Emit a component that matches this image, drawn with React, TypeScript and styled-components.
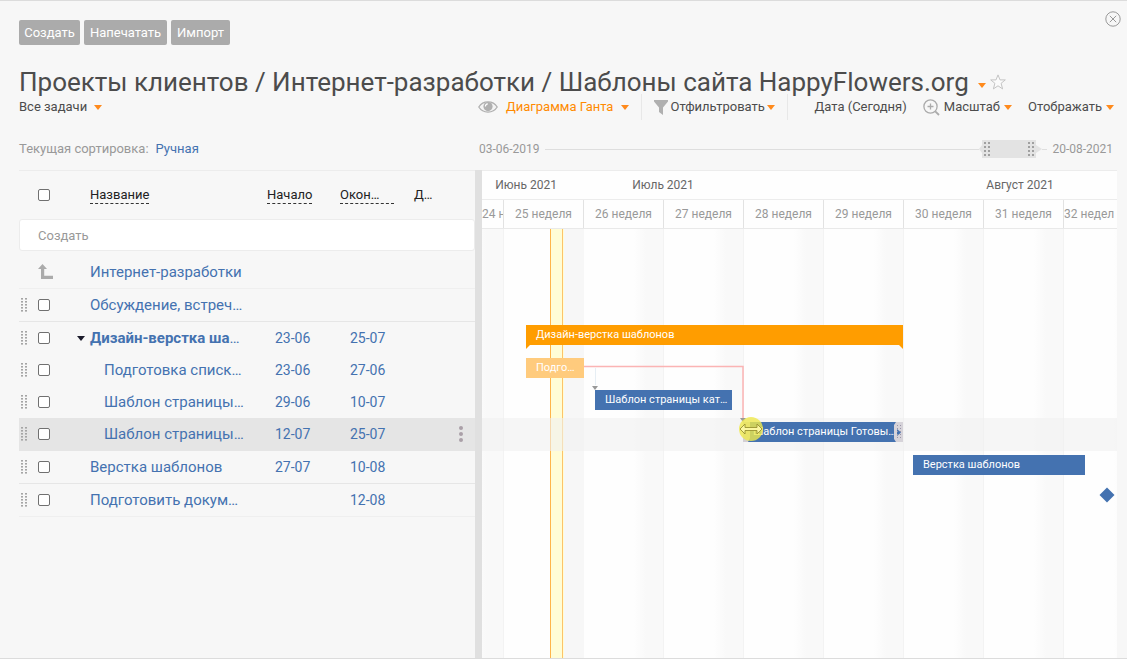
import React from "react";
import styled, { createGlobalStyle, css } from "styled-components";

const GlobalStyle = createGlobalStyle`
  *, *::before, *::after { box-sizing: border-box; }
  body {
    margin: 0;
    background: #f7f7f7;
    color: #4c4c4c;
    font-family: Roboto, "Open Sans", sans-serif;
    font-size: 13px;
    line-height: 20px;
  }
  button, input { font: inherit; color: inherit; }
  button { border: 0; padding: 0; background: none; cursor: pointer; }
  a { color: #4472b0; text-decoration: none; }
`;

const LINK = "#4472b0";
const ORANGE = "#ff9d00";
const DAY_ZERO = 21;
const WEEK = 80;

/* ---------- page header ---------- */

const Page = styled.div`
  display: flex;
  flex-direction: column;
  min-height: 100vh;
  border-top: 1px solid #dcdcdc;
  border-bottom: 1px solid #dcdcdc;
`;

const TopBar = styled.header`
  display: flex;
  justify-content: space-between;
  align-items: flex-start;
  padding: 10px 6px 0 19px;
`;

const Actions = styled.div`
  display: flex;
  gap: 4px;
  padding-top: 9px;
`;

const ActionButton = styled.button<{ $width: number }>`
  min-width: ${(p) => p.$width}px;
  height: 25px;
  border-radius: 2px;
  background: #ababab;
  color: #fff;
  text-align: center;
`;

const IconButton = styled.button`
  display: flex;
`;

const TitleRow = styled.div`
  display: flex;
  align-items: center;
  height: 30px;
  margin-top: 22px;
  padding-left: 19px;
`;

const Title = styled.h1`
  margin: 0;
  font-size: 26px;
  line-height: 30px;
  font-weight: 400;
  white-space: nowrap;
`;

const TitleTools = styled.div`
  display: flex;
  align-items: flex-end;
  gap: 4px;
  padding-left: 9px;
`;

const TitleMenuButton = styled(IconButton)`
  padding-bottom: 2px;
`;

const Toolbar = styled.div`
  display: flex;
  align-items: center;
  height: 20px;
  padding-left: 19px;
  padding-right: 13px;
  white-space: nowrap;
`;

const LeftSlot = styled.div`
  flex: none;
  display: flex;
  gap: 7px;
  width: 459px;
  color: #999;
`;

const MenuButton = styled.button<{ $gap?: number; $accent?: boolean }>`
  display: flex;
  align-items: center;
  gap: ${(p) => p.$gap ?? 4}px;
  color: ${(p) => (p.$accent ? "#ff8a00" : "#4c4c4c")};
`;

const Divider = styled.span`
  flex: none;
  width: 1px;
  height: 26px;
  margin: 0 12px;
  background: #e8e8e8;
`;

const ToolGroup = styled.div`
  display: flex;
  align-items: center;
  gap: 16px;
  margin-left: auto;
`;

const Caret = ({ color = "#ff8a1c" }: { color?: string }) => (
  <svg width="8" height="5" viewBox="0 0 8 5" aria-hidden="true">
    <path d="M0 0h8L4 5z" fill={color} />
  </svg>
);

const RangeRow = styled.div`
  display: flex;
  align-items: center;
  height: 42px;
  margin-top: 11px;
  padding-left: 19px;
  padding-right: 14px;
  white-space: nowrap;
`;

const Range = styled.div`
  flex: 1;
  display: flex;
  align-items: center;
  padding-left: 1px;
  font-size: 12px;
  color: #999;
`;

const Track = styled.span<{ $short?: boolean }>`
  flex: ${(p) => (p.$short ? "0 0 5px" : "1")};
  height: 1px;
  background: #dedede;
  ${(p) => (p.$short ? "margin-right: 5px" : "margin-left: 5px")};
`;

/* ---------- task table ---------- */

const Main = styled.main`
  flex: 1;
  display: flex;
  padding-left: 19px;
  padding-right: 10px;
`;

const TaskPane = styled.section`
  flex: 0 0 456px;
`;

const Splitter = styled.div`
  flex: 0 0 7px;
  background: #e0e0e0;
`;

const Table = styled.table`
  width: 100%;
  table-layout: fixed;
  border-collapse: separate;
  border-spacing: 0;

  th, td {
    padding: 0;
    text-align: left;
    font-weight: 400;
    white-space: nowrap;
  }
`;

const HeadRow = styled.tr`
  th {
    height: 49px;
    border-top: 1px solid #ececec;
    color: #222;
  }
`;

const SortButton = styled.button<{ $wide?: boolean; $plain?: boolean }>`
  display: block;
  min-width: ${(p) => (p.$wide ? "54px" : "0")};
  line-height: 16px;
  text-align: left;
  border-bottom: ${(p) => (p.$plain ? "0" : "1px dashed #333")};
`;

const CreateInput = styled.input`
  display: block;
  width: 100%;
  height: 32px;
  margin-bottom: 5px;
  padding: 0 18px;
  border: 1px solid #ececec;
  border-radius: 3px;
  background: #fff;
  outline: none;
  &::placeholder { color: #999; opacity: 1; }
`;

const Row = styled.tr<{ $line?: "soft" | "firm"; $active?: boolean }>`
  td {
    background: ${(p) => (p.$active ? "#e5e5e5" : "transparent")};
    border-bottom: ${(p) =>
      p.$active
        ? "1px solid #e5e5e5"
        : p.$line
          ? `1px solid ${p.$line === "soft" ? "#efefef" : "#e6e6e6"}`
          : "0"};
  }
`;

const Cell = styled.div<{ $indent?: number }>`
  display: flex;
  align-items: center;
  height: 32px;
  padding-left: ${(p) => p.$indent ?? 0}px;
  font-size: 15px;
  color: ${LINK};
`;

const DateCell = styled(Cell)`
  font-size: 14px;
`;

const CheckCell = styled(Cell)`
  justify-content: space-between;
  padding-right: 5px;
`;

const NameLink = styled.a<{ $bold?: boolean }>`
  font-weight: ${(p) => (p.$bold ? 700 : 400)};
`;

const Check = styled.input`
  appearance: none;
  display: block;
  width: 12px;
  height: 12px;
  margin: 0;
  border: 1px solid #707070;
  border-radius: 2px;
  background: #fff;
`;

const Grip = ({ rows = 5 }: { rows?: number }) => (
  <svg width="7" height={rows * 3} aria-hidden="true">
    {Array.from({ length: rows }, (_, i) => (
      <g key={i} fill="#a5a5a5">
        <rect x="0" y={i * 3} width="2" height="1.6" />
        <rect x="4" y={i * 3} width="2" height="1.6" />
      </g>
    ))}
  </svg>
);

/* ---------- gantt ---------- */

const Gantt = styled.section`
  flex: 1;
  min-width: 0;
  display: flex;
  flex-direction: column;
  overflow: hidden;
  background: #fefefe;
`;

const Months = styled.div`
  display: flex;
  height: 30px;
  border-top: 1px solid #ececec;
  border-bottom: 1px solid #ececec;
  font-size: 12px;
  line-height: 29px;
  color: #666;
`;

const Month = styled.div<{ $width: number }>`
  flex: 0 0 ${(p) => p.$width}px;
  text-align: center;
`;

const Weeks = styled.div`
  display: flex;
  height: 29px;
  border-bottom: 1px solid #e9e9e9;
  font-size: 12px;
  line-height: 28px;
  color: #999;
`;

const Week = styled.div<{ $width?: number }>`
  flex: 0 0 ${(p) => p.$width ?? WEEK}px;
  border-right: 1px solid #e2e2e2;
  text-align: center;
  overflow: hidden;
  white-space: nowrap;
`;

const LastWeek = styled(Week)`
  flex: 1;
  border-right: 0;
  text-align: left;
`;

const Field = styled.div`
  position: relative;
  flex: 1;
  padding-top: 60px;
  background: repeating-linear-gradient(
      to right,
      #fefefe 0,
      #fefefe 50px,
      #f9f9f9 62px,
      #f9f9f9 79px,
      #f3f3f3 79px,
      #f3f3f3 80px
    )
    ${DAY_ZERO + 1 - WEEK}px 0 / 4000px 100%;
`;

const Today = styled.div`
  position: absolute;
  top: 0;
  bottom: 0;
  left: 68px;
  width: 34px;
  background: linear-gradient(to right, #fffdd6 13px, #f7f7f7 13px);
  border-left: 1px solid #ffb54a;

  &::after {
    content: "";
    position: absolute;
    inset: 0 auto 0 11px;
    width: 1px;
    background: #fdc36a;
  }
`;

const Lane = styled.div<{ $line?: boolean; $active?: boolean; $summary?: boolean }>`
  position: relative;
  height: ${(p) => (p.$line ? 33 : 32)}px;
  padding-top: ${(p) => (p.$summary ? 3 : 4)}px;
  background: ${(p) => (p.$active ? "rgba(240, 240, 240, 0.6)" : "transparent")};
`;

const barKinds = {
  summary: css`
    background: ${ORANGE};
    &::before,
    &::after {
      content: "";
      position: absolute;
      top: 20px;
      border-top: 4px solid ${ORANGE};
    }
    &::before { left: 0; border-right: 4px solid transparent; }
    &::after { right: 0; border-left: 4px solid transparent; }
  `,
  late: css`background: #ffcb7d;`,
  task: css`background: #4472b0;`,
};

const Bar = styled.div<{ $kind: keyof typeof barKinds }>`
  position: relative;
  display: flex;
  align-items: center;
  height: 20px;
  padding-left: 10px;
  color: #fff;
  font-size: 11px;
  white-space: nowrap;
  ${(p) => barKinds[p.$kind]}
`;

const EdgeHandle = styled.span<{ $side: "left" | "right" }>`
  position: absolute;
  top: 0;
  ${(p) => p.$side}: 0;
  display: flex;
  width: 9px;
  height: 20px;
`;

const Links = styled.svg`
  position: absolute;
  top: 0;
  left: 0;
  width: 100%;
  height: 300px;
  pointer-events: none;
`;

/* ---------- data ---------- */

type Task = {
  name: string;
  cut?: boolean;
  start?: string;
  end?: string;
  indent?: boolean;
  bold?: boolean;
  line?: "soft" | "firm";
  active?: boolean;
  bar?: { from: number; to: number; kind: keyof typeof barKinds; label: string };
};

const tasks: Task[] = [
  { name: "Обсуждение, встреч", cut: true, line: "firm" },
  {
    name: "Дизайн-верстка ша", cut: true, start: "23-06", end: "25-07", bold: true,
    bar: { from: 44, to: 421, kind: "summary", label: "Дизайн-верстка шаблонов" },
  },
  {
    name: "Подготовка списк", cut: true, start: "23-06", end: "27-06", indent: true,
    bar: { from: 44, to: 102, kind: "late", label: "Подго…" },
  },
  {
    name: "Шаблон страницы", cut: true, start: "29-06", end: "10-07", indent: true,
    bar: { from: 113, to: 250, kind: "task", label: "Шаблон страницы кат…" },
  },
  {
    name: "Шаблон страницы", cut: true, start: "12-07", end: "25-07", indent: true, active: true,
    bar: { from: 261, to: 421, kind: "task", label: "Шаблон страницы Готовы…" },
  },
  {
    name: "Верстка шаблонов", start: "27-07", end: "10-08", line: "firm",
    bar: { from: 431, to: 603, kind: "task", label: "Верстка шаблонов" },
  },
  { name: "Подготовить докум", cut: true, end: "12-08", line: "soft" },
];

const weeks = [25, 26, 27, 28, 29, 30, 31];

export default function App() {
  return (
    <Page>
      <GlobalStyle />
      <TopBar>
        <Actions>
          <ActionButton $width={61}>Создать</ActionButton>
          <ActionButton $width={83}>Напечатать</ActionButton>
          <ActionButton $width={59}>Импорт</ActionButton>
        </Actions>
        <IconButton aria-label="Закрыть">
          <svg width="16" height="16" viewBox="0 0 16 16" fill="none" stroke="#999">
            <circle cx="8" cy="8" r="7.2" />
            <path d="M4.8 4.8l6.4 6.4M11.2 4.8l-6.4 6.4" />
          </svg>
        </IconButton>
      </TopBar>

      <TitleRow>
        <Title>Проекты клиентов / Интернет-разработки / Шаблоны сайта HappyFlowers.org</Title>
        <TitleTools>
          <TitleMenuButton aria-label="Меню проекта"><Caret /></TitleMenuButton>
          <IconButton aria-label="В избранное">
            <svg width="16" height="16" viewBox="0 0 16 16" fill="#fbfbfb" stroke="#c4c4c4">
              <path d="M8 .9l2 5h5.3l-4.2 3.4 1.5 5.6L8 11.8l-4.6 3.1 1.5-5.6L.7 5.9H6z" />
            </svg>
          </IconButton>
        </TitleTools>
      </TitleRow>

      <Toolbar>
        <LeftSlot>
          <MenuButton $gap={7}>Все задачи <Caret /></MenuButton>
        </LeftSlot>
        <MenuButton $gap={8} $accent>
          <svg width="20" height="14" viewBox="0 0 20 14" aria-hidden="true">
            <path d="M.8 7C5 .2 15 .2 19.2 7 15 13.8 5 13.8.8 7z" fill="#f4f4f4" stroke="#b0b0b0" strokeWidth="1.3" />
            <circle cx="10" cy="6.6" r="4.6" fill="#b0b0b0" />
            <path d="M7.4 6.4a2.6 2.6 0 0 1 2.4-2.5" fill="none" stroke="#fff" strokeWidth="1.2" />
          </svg>
          Диаграмма Ганта <Caret />
        </MenuButton>
        <Divider />
        <MenuButton $gap={2}>
          <svg width="14" height="15" viewBox="0 0 14 15" aria-hidden="true">
            <path d="M0 0h14v1.5L9 7.5V15L5 12V7.5L0 1.5z" fill="#b0b0b0" />
          </svg>
          Отфильтровать <Caret />
        </MenuButton>
        <Divider />
        <ToolGroup>
          <MenuButton>Дата (Сегодня)</MenuButton>
          <MenuButton>
            <svg width="17" height="17" viewBox="0 0 17 17" fill="none" stroke="#ababab" strokeWidth="1.3" aria-hidden="true">
              <circle cx="7.5" cy="7.5" r="6.6" />
              <path d="M4.5 7.5h6M7.5 4.5v6" />
              <path d="M12.3 12.3l3.7 3.7" strokeWidth="1.8" />
            </svg>
            Масштаб <Caret />
          </MenuButton>
          <MenuButton>Отображать <Caret /></MenuButton>
        </ToolGroup>
      </Toolbar>

      <RangeRow>
        <LeftSlot>
          <span>Текущая сортировка:</span>
          <a href="#sort">Ручная</a>
        </LeftSlot>
        <Range>
          03-06-2019
          <Track />
          <svg width="63" height="18" viewBox="0 0 63 18" role="img" aria-label="Видимый период">
            <path d="M0 9l3-4V0h54v5l6 4-6 4v5H3v-5z" fill="#e3e3e3" />
            {[5, 9, 49, 53].map((x) =>
              [2, 6, 10, 14].map((y) => (
                <rect key={`${x}-${y}`} x={x} y={y} width="2" height="2" fill="#a0a0a0" />
              ))
            )}
          </svg>
          <Track $short />
          20-08-2021
        </Range>
      </RangeRow>

      <Main>
        <TaskPane>
          <Table>
            <colgroup>
              <col style={{ width: 19 }} />
              <col style={{ width: 52 }} />
              <col style={{ width: 177 }} />
              <col style={{ width: 73 }} />
              <col style={{ width: 74 }} />
              <col />
            </colgroup>
            <thead>
              <HeadRow>
                <th />
                <th><Check type="checkbox" aria-label="Выбрать все" /></th>
                <th><SortButton>Название</SortButton></th>
                <th><SortButton>Начало</SortButton></th>
                <th><SortButton $wide>Окон…</SortButton></th>
                <th><SortButton $plain>Д…</SortButton></th>
              </HeadRow>
            </thead>
            <tbody>
              <tr>
                <td colSpan={6}>
                  <CreateInput placeholder="Создать" aria-label="Создать" />
                </td>
              </tr>
              <Row $line="soft">
                <td />
                <td>
                  <Cell>
                    <svg width="16" height="16" viewBox="0 0 16 16" aria-hidden="true">
                      <path d="M4.5 0L9 5H6.2v6.8H15V15H3V5H0z" fill="#ababab" />
                    </svg>
                  </Cell>
                </td>
                <td colSpan={4}>
                  <Cell><NameLink href="#parent">Интернет-разработки</NameLink></Cell>
                </td>
              </Row>
              {tasks.map((t, i) => (
                <Row key={i} $line={t.line} $active={t.active}>
                  <td><Cell $indent={2}><Grip /></Cell></td>
                  <td>
                    <CheckCell>
                      <Check type="checkbox" aria-label={t.name} />
                      {t.bold && (
                        <IconButton aria-label="Свернуть"><Caret color="#1b1b2b" /></IconButton>
                      )}
                    </CheckCell>
                  </td>
                  <td>
                    <Cell $indent={t.indent ? 14 : 0}>
                      <NameLink href="#task" $bold={t.bold}>{t.name}</NameLink>
                      {t.cut && "…"}
                    </Cell>
                  </td>
                  <td><DateCell $indent={8}>{t.start}</DateCell></td>
                  <td><DateCell $indent={10}>{t.end}</DateCell></td>
                  <td>
                    {t.active && (
                      <Cell $indent={45}>
                        <IconButton aria-label="Действия">
                          <svg width="4" height="16" viewBox="0 0 4 16" fill="#aaa0a8">
                            <circle cx="2" cy="2" r="2" />
                            <circle cx="2" cy="8" r="2" />
                            <circle cx="2" cy="14" r="2" />
                          </svg>
                        </IconButton>
                      </Cell>
                    )}
                  </td>
                </Row>
              ))}
            </tbody>
          </Table>
        </TaskPane>
        <Splitter />
        <Gantt>
          <Months>
            <Month $width={88}>Июнь 2021</Month>
            <Month $width={186}>Июль 2021</Month>
            <Month $width={528}>Август 2021</Month>
          </Months>
          <Weeks>
            <Week $width={22}>24 н</Week>
            {weeks.map((w) => <Week key={w}>{w} неделя</Week>)}
            <LastWeek>32 недел</LastWeek>
          </Weeks>
          <Field>
            <Today />
            {tasks.map((t, i) => (
              <Lane
                key={i}
                $line={Boolean(t.line) || t.active}
                $active={t.active}
                $summary={t.bar?.kind === "summary"}
              >
                {t.bar && (
                  <Bar
                    $kind={t.bar.kind}
                    style={{ marginLeft: t.bar.from, width: t.bar.to - t.bar.from }}
                  >
                    {t.bar.label}
                    {t.active && (
                      <>
                        <EdgeHandle $side="left">
                          <svg width="9" height="20"><path d="M0 0h7v16l-2 4H0z" fill="#d3cfd4" /></svg>
                        </EdgeHandle>
                        <EdgeHandle $side="right">
                          <svg width="9" height="20">
                            <path d="M2 0h7v20H2L0 17V3z" fill="#d6d3d9" />
                            <path d="M3 7l4 3.5-4 3.5z" fill={LINK} />
                            <path d="M3.5 3v14M6.5 3v14" stroke="#9995a8" strokeDasharray="1 2" />
                          </svg>
                        </EdgeHandle>
                      </>
                    )}
                  </Bar>
                )}
              </Lane>
            ))}
            <Links aria-hidden="true">
              <path d="M102 137.5h159v54" fill="none" stroke="#fbb4b4" strokeWidth="1.5" />
              <path d="M113.5 139v17" stroke="#e6eef4" />
              <path d="M110 157h6l-3 4zM258 189h6l-3 4z" fill="#999" />
              <path d="M625 258.500l7.500 7.500-7.500 7.500-7.500-7.500z" fill={LINK} />
              <circle cx="269" cy="200" r="12" fill="#efe94c" fillOpacity="0.8" />
              <path
                d="M258 200l5-5v3.500h12V195l5 5-5 5v-3.500h-12v3.500z"
                fill="#fbf7a0"
                stroke="#9a9330"
                strokeWidth="0.900"
              />
            </Links>
          </Field>
        </Gantt>
      </Main>
    </Page>
  );
}
